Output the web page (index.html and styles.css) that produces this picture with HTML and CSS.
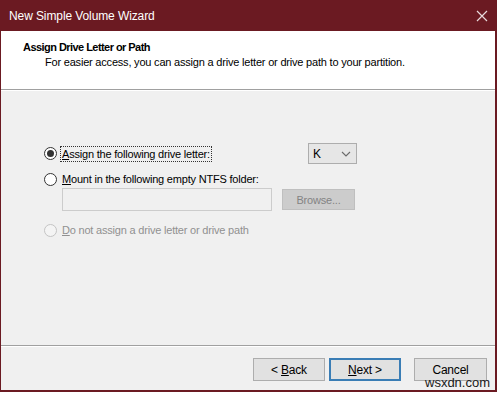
FILE: index.html
```html
<!DOCTYPE html>
<html lang="en">
<head>
    <meta charset="UTF-8">
    <meta name="viewport" content="width=device-width, initial-scale=1.0">
    <title>New Simple Volume Wizard</title>
    <link rel="stylesheet" href="styles.css">
</head>
<body>
    <div class="window">
        <!-- Title Bar -->
        <div class="titlebar">
            <span class="title">New Simple Volume Wizard</span>
            <svg class="close" width="12" height="12" viewBox="0 0 12 12">
                <path d="M1 1 L11 11 M11 1 L1 11" stroke="#e9d9db" stroke-width="1.2" fill="none"/>
            </svg>
        </div>

        <!-- Header -->
        <div class="header">
            <div class="heading">Assign Drive Letter or Path</div>
            <div class="subheading">For easier access, you can assign a drive letter or drive path to your partition.</div>
        </div>

        <!-- Options -->
        <div class="content">
            <div class="options">
                <div class="row first-row">
                    <span class="radio checked"></span>
                    <span class="label focused"><u>A</u>ssign the following drive letter:</span>
                    <div class="combo">
                        <span>K</span>
                        <svg width="10" height="6" viewBox="0 0 10 6">
                            <path d="M1 1 L5 5 L9 1" stroke="#6a6a6a" stroke-width="1.1" fill="none"/>
                        </svg>
                    </div>
                </div>

                <div class="row">
                    <span class="radio"></span>
                    <span class="label"><u>M</u>ount in the following empty NTFS folder:</span>
                </div>

                <div class="folder-row">
                    <div class="textbox"></div>
                    <div class="button disabled-button">Browse...</div>
                </div>

                <div class="row disabled">
                    <span class="radio"></span>
                    <span class="label"><u>D</u>o not assign a drive letter or drive path</span>
                </div>
            </div>
        </div>

        <!-- Footer -->
        <div class="footer">
            <div class="button"><span>&lt; <u>B</u>ack</span></div>
            <div class="button default-button"><span><u>N</u>ext &gt;</span></div>
            <div class="button cancel">Cancel</div>
        </div>
    </div>

    <span class="watermark">wsxdn.com</span>
</body>
</html>
```

FILE: styles.css
```css
/* General Reset */
body {
    margin: 0;
    background: #ffffff;
    font-family: "Liberation Sans", Arial, sans-serif;
    font-size: 11px;
    letter-spacing: -0.2px;
    color: #000;
}

/* Window frame */
.window {
    width: 494px;
    height: 390px;
    border-left: 1px solid #6b1a22;
    border-right: 2px solid #6b1a22;
    border-bottom: 2px solid #6b1a22;
    background: #f0f0f0;
    display: flex;
    flex-direction: column;
}

/* Title Bar */
.titlebar {
    height: 31px;
    background: #6b1a22;
    display: flex;
    align-items: center;
    padding: 0 7px 0 8px;
    flex-shrink: 0;
}

.title {
    color: #fff;
    font-size: 12px;
    letter-spacing: -0.1px;
    flex: 1;
}

/* Header */
.header {
    height: 58px;
    background: #fff;
    border-bottom: 1px solid #a0a0a0;
    box-shadow: 0 1px 0 #ffffff;
    padding-left: 22px;
    flex-shrink: 0;
}

.heading {
    font-weight: bold;
    letter-spacing: -0.55px;
    margin-top: 10px;
    height: 15px;
}

.subheading {
    padding-left: 22px;
    height: 15px;
}

/* Content */
.content {
    flex: 1;
    border-bottom: 1px solid #a0a0a0;
    box-shadow: 0 1px 0 #ffffff;
    padding-left: 43px;
}

.options {
    width: 313px;
    display: flex;
    flex-direction: column;
}

.row {
    display: flex;
    align-items: center;
    height: 18px;
}

.first-row {
    margin-top: 53px;
    height: 21px;
    margin-bottom: 6px;
}

.radio {
    width: 11px;
    height: 11px;
    border: 1px solid #333;
    border-radius: 50%;
    background: #fff;
    position: relative;
    flex-shrink: 0;
}

.radio.checked::after {
    content: "";
    position: absolute;
    left: 2px;
    top: 2px;
    width: 7px;
    height: 7px;
    border-radius: 50%;
    background: #333;
}

.label {
    margin-left: 3px;
    padding: 1px 1px;
    border: 1px dotted transparent;
}

.label.focused {
    border-color: #333;
}

.disabled .radio {
    border-color: #c4c4c4;
    background: #f4f4f4;
}

.disabled .label {
    color: #909090;
}

/* Drive letter combo */
.combo {
    margin-left: auto;
    height: 19px;
    border: 1px solid #adadad;
    background: #e6e6e6;
    display: flex;
    align-items: center;
    justify-content: space-between;
    padding: 0 5px 0 4px;
    width: 38px;
}

.combo span {
    font-size: 12px;
}

/* Folder path */
.folder-row {
    display: flex;
    align-items: center;
    padding-left: 18px;
    gap: 10px;
    margin-bottom: 10px;
}

.textbox {
    width: 208px;
    height: 21px;
    border: 1px solid #cccccc;
    background: #f0f0f0;
}

/* Buttons */
.button {
    width: 70px;
    height: 21px;
    border: 1px solid #adadad;
    background: #e1e1e1;
    display: flex;
    align-items: center;
    justify-content: center;
    font-size: 12px;
}

.disabled-button {
    width: 71px;
    background: #cccccc;
    border-color: #bfbfbf;
    color: #838383;
    height: 19px;
    font-size: 11px;
}

.default-button {
    border: 2px solid #3a7db5;
    width: 68px;
    height: 19px;
}

/* Footer */
.footer {
    height: 44px;
    display: flex;
    justify-content: flex-end;
    align-items: flex-start;
    padding: 12px 8px 0 0;
    box-sizing: border-box;
    gap: 4px;
}

.footer .cancel {
    width: 71px;
    margin-left: 9px;
}

/* Watermark */
.watermark {
    position: absolute;
    left: 425px;
    top: 375px;
    font-size: 13px;
    letter-spacing: 0;
    color: #1a1a1a;
}
```
